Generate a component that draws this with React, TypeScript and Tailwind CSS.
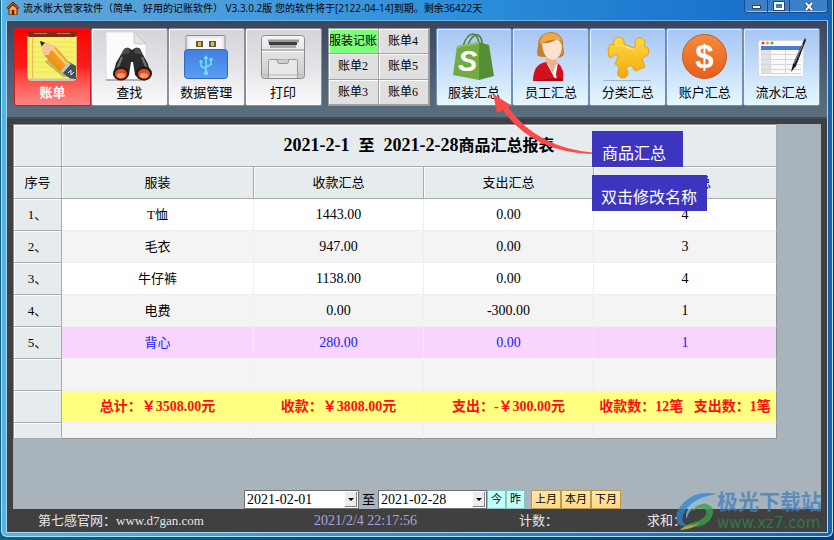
import React from "react";

const serif = "font-['Liberation_Serif','Noto_Sans_CJK_SC',serif]";

function NoteIcon() {
  return (
    <svg viewBox="0 0 50 50" className="size-[50px]" aria-hidden="true">
      <defs>
        <linearGradient id="pencil" x1="0" y1="1" x2="1" y2="0">
          <stop offset="0" stopColor="#e06a00" />
          <stop offset="0.5" stopColor="#f79a1c" />
          <stop offset="1" stopColor="#ffc552" />
        </linearGradient>
      </defs>
      <rect x="0.5" y="3" width="49" height="47" rx="4" fill="#c9c4bd" />
      <rect x="0.5" y="3" width="49" height="44.500" rx="3" fill="#f7f26c" />
      <path d="M2 11h46M2 16h46M2 21h46M2 26h46M2 31h46M2 36h46M2 41h46" stroke="#e8e068" />
      <path d="M5.500 5v42" stroke="#eebb55" />
      <rect x="0.500" y="1" width="49" height="5" rx="2" fill="#7c2d14" />
      <path d="M7 2.500h13M30 2.500h13" stroke="#b7795f" />
      <path d="M18 31l18 15h8L22 27z" fill="#8d8a35" opacity=".5" />
      <path d="M13 10l15 5 15 17-9 10-17-18z" fill="url(#pencil)" />
      <path d="M13 10l15 5-1 4-4 1-1 4-5 0z" fill="#f5c79f" />
      <path d="M13 10l5 1.700-3.500 3.600z" fill="#222" />
      <path d="M26 18l16 18" stroke="#ffd98a" strokeWidth="2" />
      <path d="M42 31l7 4v13l-6-.5-8-6z" fill="#41525e" />
      <path d="M41 31l3 2-8 9-3-1z" fill="#b9c7cf" />
      <path d="M41 42l3-3 0 5 3-3" stroke="#e4eef2" fill="none" />
    </svg>
  );
}

function FindIcon() {
  return (
    <svg viewBox="0 0 50 50" className="size-[50px]" aria-hidden="true">
      <path d="M2 1h28l12 12v36H2z" fill="#fbfbfb" stroke="#dcdcdc" />
      <path d="M30 1l12 12H32q-2 0-2-2z" fill="#e3e3e3" stroke="#bbb" strokeWidth=".7" />
      <path d="M2 49h40" stroke="#777" />
      <path d="M19 20q2-4 6-3l3 2 3-2q5-1 6 3l7 13 3 12-3 3h-9l-4-4-2-13h-2l-2 13-4 4h-8l-4-4 3-12z" fill="#2b2b2b" />
      <path d="M19 20q2-4 6-3l1 5-9 2zM31 17q5-1 6 3l2 4-9-2z" fill="#4b4b4b" />
      <path d="M18 26l-5 12M38 26l5 12" stroke="#757575" strokeWidth="2" />
      <ellipse cx="17" cy="42.500" rx="8" ry="7" fill="#1c1c1c" />
      <ellipse cx="40" cy="42.500" rx="8" ry="7" fill="#1c1c1c" />
      <ellipse cx="17" cy="43" rx="6" ry="5" fill="#ed4a22" />
      <ellipse cx="40" cy="43" rx="6" ry="5" fill="#ed4a22" />
      <ellipse cx="17" cy="44.500" rx="4" ry="2.500" fill="#ff9d73" />
      <ellipse cx="40" cy="44.500" rx="4" ry="2.500" fill="#ff9d73" />
    </svg>
  );
}

function UsbIcon() {
  return (
    <svg viewBox="0 0 50 50" className="size-[50px]" aria-hidden="true">
      <defs>
        <linearGradient id="usb" x1="0" y1="0" x2="0" y2="1">
          <stop offset="0" stopColor="#3f7fdf" />
          <stop offset="1" stopColor="#5a9df2" />
        </linearGradient>
      </defs>
      <rect x="5" y="4.500" width="39" height="20" rx="1" fill="#e9e9e9" stroke="#8f8f8f" />
      <rect x="8" y="7" width="33" height="13" fill="#f7f7f7" />
      <rect x="15" y="10" width="7" height="6" fill="#5b5b3f" />
      <rect x="28" y="10" width="7" height="6" fill="#5b5b3f" />
      <rect x="17" y="11" width="3" height="4" fill="#dcc52d" />
      <rect x="30" y="11" width="3" height="4" fill="#dcc52d" />
      <rect x="3.500" y="18.500" width="43" height="29" rx="3" fill="url(#usb)" stroke="#3569bd" />
      <path d="M25 27v15M25 38l-5-3v-4M25 36l5-2.500V29" stroke="#6fe0f5" strokeWidth="1.500" fill="none" />
      <path d="M25 24l2.500 4h-5z" fill="#6fe0f5" />
      <circle cx="25" cy="42" r="2.200" fill="#6fe0f5" />
      <circle cx="20" cy="30.500" r="1.600" fill="#6fe0f5" />
      <rect x="28.500" y="27" width="3" height="3" fill="#6fe0f5" />
    </svg>
  );
}

function PrintIcon() {
  return (
    <svg viewBox="0 0 50 50" className="size-[50px]" aria-hidden="true">
      <defs>
        <linearGradient id="printer" x1="0" y1="0" x2="0" y2="1">
          <stop offset="0" stopColor="#f5f5f5" />
          <stop offset="1" stopColor="#c9c9c9" />
        </linearGradient>
      </defs>
      <rect x="3.500" y="4.500" width="43" height="43" rx="3" fill="url(#printer)" stroke="#8c8c8c" />
      <path d="M4 19h42" stroke="#8c8c8c" />
      <path d="M4 20.500h42" stroke="#fff" />
      <path d="M10 8.500h31v3H10z" fill="#999" />
      <path d="M11 11h28v3H11z" fill="#3d3d3d" />
      <path d="M12 14h26v3H12z" fill="#aaa" />
      <path d="M10.500 47V29.500q0-1 1-1h27q1 0 1 1V47" fill="#e8e8e8" stroke="#999" />
      <path d="M19.500 28.500v2q0 2 2 2h7q2 0 2-2v-2" fill="#cfcfcf" stroke="#909090" />
      <path d="M5 44h40" stroke="#b5b5b5" />
    </svg>
  );
}

function BagIcon() {
  return (
    <svg viewBox="0 0 50 50" className="size-[50px]" aria-hidden="true">
      <path d="M14 15Q18 3 24 3q5 1 6 10M19 14Q23 3 29 4q4 3 4 8" stroke="#55803a" strokeWidth="1.600" fill="none" />
      <path d="M8 15l22-4v38L4 44z" fill="#72ab3f" />
      <path d="M30 11l10 3 5 31-15 4z" fill="#558f35" />
      <path d="M8 15l22-4v2L8 17z" fill="#8fc05a" />
      <text x="9" y="40" fontSize="29" fontWeight="bold" fontStyle="italic" fill="#fff" fontFamily="Liberation Sans, sans-serif">S</text>
    </svg>
  );
}

function StaffIcon() {
  return (
    <svg viewBox="0 0 50 50" className="size-[50px]" aria-hidden="true">
      <path d="M12 25Q10 22 12 15q0-9 6-12 7-4 14 0 6 4 5 12 2 7 0 10-4 3-8 1H18q-4 0-6-1z" fill="#c9802a" />
      <path d="M14 13q0-10 10-11 9 0 12 8-8-4-22 3z" fill="#eda94c" />
      <path d="M20 22h11v14l-4 8-7-9z" fill="#f0b08d" />
      <path d="M16 12q9 1 15-4 5 3 5 9-1 10-9 12-10-1-11-17z" fill="#fde0ce" />
      <path d="M18 34l4-1 5 9 3-9 3 1 2 15H19z" fill="#f5f5f7" />
      <path d="M7 50q0-17 13-19l10 19zM37 50q2-12-5-18l-2 11 1 7z" fill="#d3111e" />
      <path d="M7 50h30v-2l-9-1z" fill="#b10814" />
    </svg>
  );
}

function PuzzleIcon() {
  return (
    <svg viewBox="0 0 50 50" className="size-[50px]" aria-hidden="true">
      <defs>
        <linearGradient id="puzzle" x1="0" y1="0" x2="0" y2="1">
          <stop offset="0" stopColor="#ffd84a" />
          <stop offset="1" stopColor="#f4ab07" />
        </linearGradient>
      </defs>
      <path
        d="M11 14Q9 7 15 6q7 0 6 7l10 4q3-2 1-5 0-6 6-5 6 2 3 8l4 2q2 6-2 8-3 1-4 3l3 8-9 4q-3-1-3-4-3-3-6 0-1 3 1 5 0 6-6 6-6-2-4-7 2-2 0-5l-3-2 3-7q-1-4-4-2-2 4-5 2l-1-7 2-6z"
        fill="url(#puzzle)"
        stroke="#e3a312"
      />
      <path d="M12 14l9 1 10 4" fill="none" stroke="#ffef96" />
      <path d="M0 49.500h48" stroke="#7f97ad" opacity=".6" />
    </svg>
  );
}

function DollarIcon() {
  return (
    <svg viewBox="0 0 50 50" className="size-[50px]" aria-hidden="true">
      <defs>
        <linearGradient id="coin" x1="0" y1="0" x2="0" y2="1">
          <stop offset="0" stopColor="#f58a3c" />
          <stop offset="1" stopColor="#e75e1c" />
        </linearGradient>
      </defs>
      <circle cx="24.500" cy="25.500" r="22" fill="url(#coin)" stroke="#ca5a20" />
      <text x="24.500" y="37" textAnchor="middle" fontSize="33" fontWeight="bold" fill="#fff" fontFamily="Liberation Sans, sans-serif">$</text>
    </svg>
  );
}

function LedgerIcon() {
  return (
    <svg viewBox="0 0 50 50" className="size-[50px]" aria-hidden="true">
      <rect x="1.500" y="9.500" width="45" height="36" rx="2" fill="#fafafa" stroke="#d5d9e0" />
      <circle cx="6" cy="12" r="1.500" fill="#e0412f" />
      <circle cx="10.500" cy="12" r="1.500" fill="#e69b28" />
      <circle cx="15" cy="12" r="1.500" fill="#4cae3d" />
      <rect x="4" y="15" width="40" height="4" fill="#4a7bd6" />
      <rect x="4" y="19" width="9" height="23" fill="#e2e2e2" />
      <path d="M4 23.500h40M4 28.500h40M4 33.500h40M4 38.500h40M13.500 19v23M28.500 19v23M4 42.500h40" stroke="#d3d6da" fill="none" />
      <path d="M48 7L36 33l-2 8 5-6L49 9z" fill="#17191c" />
      <path d="M46 13l-9 20" stroke="#8a8f94" />
    </svg>
  );
}

function HouseIcon() {
  return (
    <svg viewBox="0 0 12 13" className="h-[13px] w-3" aria-hidden="true">
      <path d="M2 6v7h8V6L6 3z" fill="#f9a13a" stroke="#3b1608" strokeWidth=".8" />
      <path d="M.5 6.500L6 1l5.500 5.500" stroke="#5b1408" strokeWidth="2.200" fill="none" />
      <path d="M1 6L6 1.200 11 6" stroke="#f06a2c" fill="none" />
      <path d="M4.700 8h2.600v5H4.700z" fill="#5e1d0c" />
    </svg>
  );
}

const mainTools = [
  { label: "账单", Icon: NoteIcon },
  { label: "查找", Icon: FindIcon },
  { label: "数据管理", Icon: UsbIcon },
  { label: "打印", Icon: PrintIcon },
];

const summaryTools = [
  { label: "服装汇总", Icon: BagIcon },
  { label: "员工汇总", Icon: StaffIcon },
  { label: "分类汇总", Icon: PuzzleIcon },
  { label: "账户汇总", Icon: DollarIcon },
  { label: "流水汇总", Icon: LedgerIcon },
];

const books = ["服装记账", "账单4", "账单2", "账单5", "账单3", "账单6"];

const rows = [
  ["1、", "T恤", "1443.00", "0.00", "4"],
  ["2、", "毛衣", "947.00", "0.00", "3"],
  ["3、", "牛仔裤", "1138.00", "0.00", "4"],
  ["4、", "电费", "0.00", "-300.00", "1"],
  ["5、", "背心", "280.00", "0.00", "1"],
];

const headCell =
  "border-r border-b border-[#a9acae] bg-[#e6ebee] p-0 text-center text-[13px] font-normal shadow-[inset_1px_1px_0_#fafcfd]";
const bodyCell =
  "border-r border-b border-[#eeeeee] p-0 text-center text-sm last:border-r-[#8f9396]";

function Toolbar() {
  return (
    <nav className="flex h-[98px] gap-[6px] border-b-2 border-[#3c4c68] bg-linear-to-b from-[#3b465c] via-[#4c5d70] to-[#5c6f7d] px-[7px] pt-[7px] pb-[11px]">
      <div className="flex grow-4 basis-0">
        {mainTools.map(({ label, Icon }, i) => (
          <button
            key={label}
            className={
              "flex flex-1 flex-col items-center rounded-xs border pt-[2px] text-[13px] leading-6 " +
              (i === 0
                ? "border-[#c8202a] bg-linear-to-b from-[#fb0000] via-[#fc1c1c] to-[#ff8585] font-bold text-white"
                : "border-[#8b8f9c] bg-linear-to-b from-[#d4d4da] via-[#e4e4e8] to-[#fbfbfd] text-black shadow-[inset_1px_1px_0_#fff]")
            }
          >
            <Icon />
            {label}
          </button>
        ))}
      </div>
      <div className="grid w-[102px] grid-cols-2 grid-rows-3 border border-[#9a9a9a]">
        {books.map((name, i) => (
          <button
            key={name}
            className={
              "border-r border-b border-[#a2a2a2] text-xs whitespace-nowrap text-black shadow-[inset_1px_1px_0_#fff] " +
              (i === 0 ? "bg-[#7dff7d]" : "bg-[#e0e0e0]")
            }
          >
            {name}
          </button>
        ))}
      </div>
      <div className="flex grow-5 basis-0">
        {summaryTools.map(({ label, Icon }) => (
          <button
            key={label}
            className="flex flex-1 flex-col items-center rounded-xs border border-[#6f8fbe] bg-linear-to-b from-[#a5c5f3] via-[#c5ddf9] to-[#e6f8ff] pt-[2px] text-[13px] leading-6 text-black shadow-[inset_1px_1px_0_#e4f0ff]"
          >
            <Icon />
            {label}
          </button>
        ))}
      </div>
    </nav>
  );
}

function Report() {
  return (
    <table className="w-full table-fixed border-separate border-spacing-0 border-t border-l border-[#8f9396] text-black">
      <colgroup>
        <col className="w-12" />
        <col className="w-[192px]" />
        <col className="w-[170px]" />
        <col className="w-[170px]" />
        <col />
      </colgroup>
      <thead>
        <tr className="h-[42px]">
          <th className={headCell} />
          <th colSpan={4} className={headCell}>
            <span className="text-base leading-5 font-bold whitespace-pre">
              <span className="text-lg leading-5">{"2021-2-1  "}</span>至
              <span className="text-lg leading-5">{"  2021-2-28"}</span>商品汇总报表
            </span>
          </th>
        </tr>
        <tr className="h-8">
          {["序号", "服装", "收款汇总", "支出汇总", "笔数汇总"].map((t) => (
            <th key={t} className={headCell}>
              {t}
            </th>
          ))}
        </tr>
      </thead>
      <tbody>
        {rows.map((row, i) => (
          <tr
            key={row[0]}
            className={
              "h-8 " + (i === 4 ? "bg-[#f8d5fd] text-[#2020ff]" : i % 2 ? "bg-[#f4f4f4]" : "bg-white")
            }
          >
            {row.map((cell, j) =>
              j === 0 ? (
                <th key={j} scope="row" className={headCell + " text-black"}>
                  {cell}
                </th>
              ) : (
                <td key={j} className={bodyCell}>
                  {j === 1 ? <span className="text-[13px]">{cell}</span> : cell}
                </td>
              ),
            )}
          </tr>
        ))}
        <tr className="h-8 bg-[#f4f4f4]">
          <th className={headCell} />
          <td className={bodyCell} />
          <td className={bodyCell} />
          <td className={bodyCell} />
          <td className={bodyCell} />
        </tr>
        <tr className="h-8 bg-[#ffff80] font-bold whitespace-pre text-[#ff1010]">
          <th className={headCell} />
          <td className={bodyCell}>总计：￥3508.00元</td>
          <td className={bodyCell}>收款：￥3808.00元</td>
          <td className={bodyCell}>支出：-￥300.00元</td>
          <td className={bodyCell}>{"收款数：12笔   支出数：1笔"}</td>
        </tr>
        <tr className="h-4 bg-[#f4f4f4]">
          <th className={headCell} />
          <td className="border-r border-b border-r-[#eeeeee] border-b-[#8f9396]" />
          <td className="border-r border-b border-r-[#eeeeee] border-b-[#8f9396]" />
          <td className="border-r border-b border-r-[#eeeeee] border-b-[#8f9396]" />
          <td className="border-r border-b border-r-[#8f9396] border-b-[#8f9396]" />
        </tr>
      </tbody>
    </table>
  );
}

function DateSelect({ value, label, className }: { value: string; label: string; className: string }) {
  return (
    <div className={"relative h-[19px] border border-[#6c7176] bg-white " + className}>
      <select aria-label={label} className="block h-full w-full appearance-none bg-white pl-[2px] text-sm leading-4 text-black">
        <option>{value}</option>
      </select>
      <span className="pointer-events-none absolute top-px right-px bottom-px flex w-3 items-center justify-center border-r border-b border-[#808080] bg-[#ececec]">
        <svg viewBox="0 0 6 3" className="h-[3px] w-[6px]" aria-hidden="true">
          <path d="M0 0h6L3 3z" fill="#000" />
        </svg>
      </span>
    </div>
  );
}

function DateBar() {
  return (
    <div className="flex items-end pl-[231px]">
      <DateSelect value="2021-02-01" label="开始日期" className="w-[115px]" />
      <span className="w-[19px] text-center text-[13px] leading-[19px] text-black">至</span>
      <DateSelect value="2021-02-28" label="结束日期" className="w-[109px]" />
      <div className="flex text-[11px] leading-[17px] text-black">
        <button className="h-[19px] w-[19px] border border-[#8cc4c4] bg-[#c4ffff]">今</button>
        <button className="h-[19px] w-[19px] border border-[#8cc4c4] bg-[#c4ffff]">昨</button>
      </div>
      <div className="ml-[6px] flex text-[11px] leading-[17px] text-black">
        {["上月", "本月", "下月"].map((m) => (
          <button key={m} className="h-[19px] w-[30px] border border-[#b99a50] bg-linear-to-b from-[#ffe9a8] to-[#ffd986]">
            {m}
          </button>
        ))}
      </div>
    </div>
  );
}

function TitleBar() {
  return (
    <header className="flex h-[21px] items-start justify-between bg-linear-to-r from-[#62a7d8] via-[#2b8fdc] via-55% to-[#1768c4] pl-px shadow-[inset_0_-1px_0_#6db5ee]">
      <h1 className="flex items-center gap-1 font-['Open_Sans','Noto_Sans_CJK_SC',sans-serif] text-[10px] leading-[17px] whitespace-nowrap text-black">
        <HouseIcon />
        流水账大管家软件（简单、好用的记账软件） V3.3.0.2版 您的软件将于[2122-04-14]到期。剩余36422天
      </h1>
      <div className="flex h-[13px] overflow-hidden rounded-b-sm border border-t-0 border-[#174a86] bg-[#3b7fc6] shadow-[inset_0_-1px_0_#9dc6ee]">
        <button aria-label="最小化" className="flex w-[23px] items-center justify-center border-r border-[#174a86] pt-px">
          <span className="h-1 w-[9px] border border-[#33435a] bg-white" />
        </button>
        <button aria-label="最大化" className="flex w-[22px] items-center justify-center border-r border-[#174a86]">
          <span className="h-2 w-[10px] border-2 border-white outline outline-[#33435a]" />
        </button>
        <button aria-label="关闭" className="flex w-[37px] items-center justify-center">
          <svg viewBox="0 0 10 9" className="h-[9px] w-[10px]" aria-hidden="true">
            <path d="M2 1l6 7M8 1L2 8" stroke="#33435a" strokeWidth="3.600" />
            <path d="M2 1l6 7M8 1L2 8" stroke="#fff" strokeWidth="2" />
          </svg>
        </button>
      </div>
    </header>
  );
}

function Callouts() {
  return (
    <>
      <svg className="pointer-events-none absolute top-[90px] left-[490px] h-[66px] w-[104px]" viewBox="490 90 104 66" aria-hidden="true">
        <path d="M493 94L511 105l-3 2q28 40 84 45.500v1.500q-60-2-89-44l-6 3z" fill="#fb4a4a" />
      </svg>
      <div className="absolute top-[131px] left-[592px] h-9 bg-[#3d35c0] pr-[17px] pl-[10px] font-['Noto_Sans_CJK_SC',sans-serif] text-base leading-[42px] text-white">
        商品汇总
      </div>
      <div className="absolute top-[175px] left-[592px] h-9 bg-[#3d35c0] pr-[10px] pl-[9px] font-['Noto_Sans_CJK_SC',sans-serif] text-base leading-[42px] text-white">
        双击修改名称
      </div>
    </>
  );
}

function Watermark() {
  return (
    <div className="pointer-events-none absolute right-[12px] bottom-[7px] flex items-center opacity-75">
      <svg viewBox="0 0 44 42" className="h-10 w-[42px]" aria-hidden="true">
        <path d="M44 3Q22-1 9 12-3 25 3 34q4 4 10 2Q5 33 9 24 16 8 44 3z" fill="#2d86d0" />
        <path d="M40 5Q24 6 15 17q-5 7-3 12Q18 11 40 5z" fill="#7fc0ee" />
        <path d="M17 22q5-8 14-9 10 2 9 10-3 13-20 15-8 1-15 3 6-6 14-8 13-3 14-11-4-7-16 0z" fill="#3aa04b" />
        <path d="M5 41q14-1 21-8-6 3-11 3-6 1-10 5z" fill="#d8c34a" />
      </svg>
      <div>
        <div className="font-['Noto_Sans_CJK_SC',sans-serif] text-[21px] leading-[25px] font-bold text-[#3d7fbd]">极光下载站</div>
        <div className="font-['DejaVu_Sans',sans-serif] text-[15px] leading-5 text-[#2c8a48]">www.xz7.com</div>
      </div>
    </div>
  );
}

export default function App() {
  return (
    <div className={"relative flex min-h-screen flex-col bg-linear-to-r from-[#12607a] to-[#083a7c] px-px pb-[3px] " + serif}>
      <div className="flex flex-1 flex-col rounded-b-md border border-t-0 border-[#b4e2fa] bg-linear-to-r from-[#55b4e6] to-[#1a62ae] px-1 pb-[3px]">
        <TitleBar />
        <div className="flex flex-1 flex-col border border-t-0 border-[#a9d4f2] bg-[#404040]">
          <Toolbar />
          <main className="mx-[6px] mt-[5px] flex flex-1 flex-col justify-between bg-[#a9b3bc]">
            <div className="pr-11">
              <Report />
            </div>
            <DateBar />
          </main>
          <footer className="flex h-[23px] items-center px-[31px] text-[13px] text-[#e8e8e8]">
            <a href="#site" className="w-[276px] whitespace-nowrap">
              第七感官网：www.d7gan.com
            </a>
            <time className="w-[205px] text-sm text-[#a9a5dc]">2021/2/4 22:17:56</time>
            <span className="w-[128px]">计数：</span>
            <span>求和：</span>
          </footer>
        </div>
      </div>
      <Callouts />
      <Watermark />
    </div>
  );
}
